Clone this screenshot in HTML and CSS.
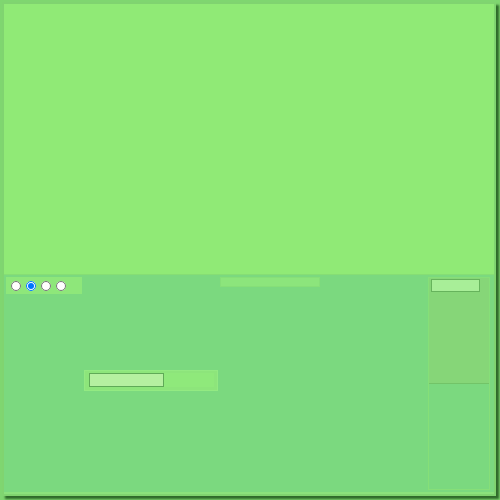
FILE: index.html
```html
<!DOCTYPE html>
<html>
<head>
<meta charset="utf-8">
<link rel="stylesheet" href="styles.css">
</head>
<body>
<div class="frame">
  <div class="top"></div>
  <div class="bottom">
    <div class="main">
      <div class="toolbar">
        <div class="radios">
          <input type="radio" name="r">
          <input type="radio" name="r" checked>
          <input type="radio" name="r">
          <input type="radio" name="r">
        </div>
        <div class="tab"></div>
      </div>
      <div class="content">
        <div class="meter">
          <div class="meter-fill"></div>
          <div class="meter-rest"></div>
        </div>
      </div>
    </div>
    <div class="side">
      <div class="side-panel">
        <div class="side-field"></div>
      </div>
    </div>
  </div>
</div>
</body>
</html>
```
FILE: styles.css
```css
html, body {
  margin: 0;
  padding: 0;
  background: #7fd670;
  font-family: "Liberation Sans", sans-serif;
}
body {
  width: 500px;
  height: 500px;
  overflow: hidden;
}
.frame {
  box-sizing: border-box;
  margin: 2px;
  width: 494px;
  height: 494px;
  border: 2px solid #80d470;
  box-shadow: 3px 3px 2px #2f6a2a;
  display: flex;
  flex-direction: column;
  background: #7bd97f;
}
.top {
  height: 270px;
  background: #90ea76;
  border-bottom: 1px solid #86de74;
}
.bottom {
  flex: 1;
  display: flex;
  padding: 2px 4px 2px 2px;
  gap: 8px;
  background: #7bd97f;
  border-bottom: 2px solid #8be27c;
}
.main {
  flex: 1;
  display: flex;
  flex-direction: column;
}
.toolbar {
  display: flex;
  align-items: flex-start;
}
.radios {
  display: flex;
  gap: 5px;
  align-items: center;
  width: 76px;
  height: 17px;
  box-sizing: border-box;
  padding-left: 5px;
  background: #8ee77a;
}
.radios input {
  margin: 0;
  width: 10px;
  height: 10px;
}
.tab {
  margin-left: 138px;
  width: 100px;
  height: 10px;
  background: #8ce57c;
  border: 1px solid #86df78;
  box-sizing: border-box;
}
.content {
  flex: 1;
  padding-top: 76px;
  padding-left: 78px;
}
.meter {
  display: flex;
  width: 134px;
  height: 21px;
  box-sizing: border-box;
  padding: 2px 3px 3px 4px;
  background: #8de57b;
  border: 1px solid #93ea82;
}
.meter-fill {
  width: 75px;
  box-sizing: border-box;
  background: #b5f0a0;
  border: 1px solid #5faa57;
}
.meter-rest {
  flex: 1;
  background: #8fe97b;
}
.side {
  width: 62px;
  box-sizing: border-box;
  border: 1px solid #86df78;
  display: flex;
  flex-direction: column;
}
.side-panel {
  height: 106px;
  box-sizing: border-box;
  background: #86d678;
  border-bottom: 1px solid #72c468;
  padding: 1px 9px 0 2px;
}
.side-field {
  height: 13px;
  box-sizing: border-box;
  background: #a8ee98;
  border: 1px solid #66b35c;
}
```
